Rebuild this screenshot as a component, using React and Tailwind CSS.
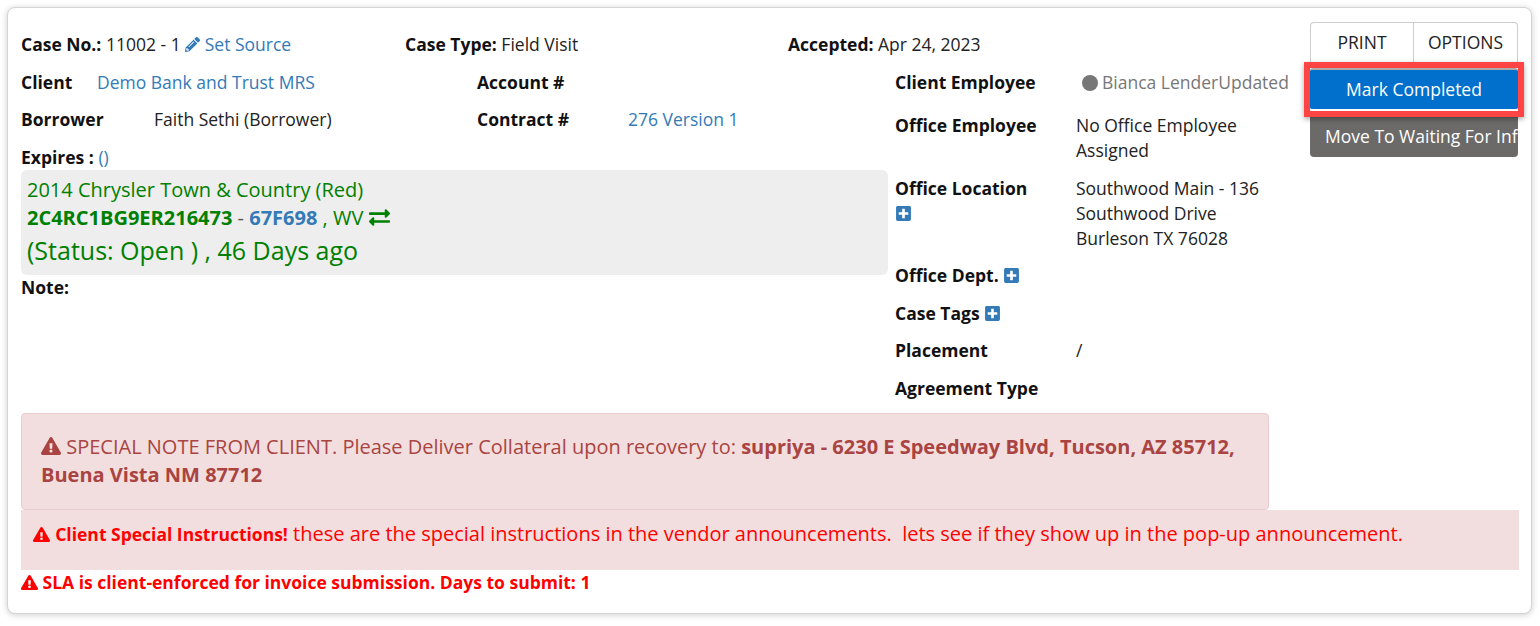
import { FaExclamationTriangle, FaPlusSquare, FaExchangeAlt, FaPencilAlt } from 'react-icons/fa'

const link = 'text-[#337ab7]'
const label = 'font-bold text-[#111]'

function InfoRow({ title, icon, breakIcon, className = 'mb-[12px]', children }) {
  return (
    <div className={`flex ${className}`}>
      <div className={`w-[181px] shrink-0 ${label}`}>
        {title}
        {icon && (
          <FaPlusSquare
            className={`${breakIcon ? 'block mt-[4px]' : 'inline ml-[4px] align-[-2px]'} text-[17px] text-[#337ab7]`}
          />
        )}
      </div>
      <div>{children}</div>
    </div>
  )
}

export default function App() {
  return (
    <div className="bg-white pt-[7px] pl-[7px] pr-[8px] pb-[12px] font-['Open_Sans',sans-serif] text-[17.5px] leading-[25px] text-[#222]">
      <div className="h-[607px] rounded-[8px] border border-[#d4d4d4] bg-white pl-[13px] pr-[12px] pt-[14px] shadow-[0_1px_6px_rgba(0,0,0,0.2)]">
        <div className="flex">
          <div className="w-[1248px] shrink-0 pt-[10px]">
            <div className="flex mb-[13px]">
              <div className="w-[384px]">
                <b className={label}>Case No.:</b> 11002 - 1{' '}
                <FaPencilAlt className={`inline text-[15px] align-[-1px] ${link}`} />{' '}
                <span className={link}>Set Source</span>
              </div>
              <div className="w-[383px]">
                <b className={label}>Case Type:</b> Field Visit
              </div>
              <div className="whitespace-nowrap">
                <b className={label}>Accepted:</b> Apr 24, 2023
              </div>
            </div>

            <div className="flex">
              <div className="w-[867px] shrink-0">
                <div className="flex mb-[12px]">
                  <div className={`w-[76px] ${label}`}>Client</div>
                  <div className={`w-[380px] ${link}`}>Demo Bank and Trust MRS</div>
                  <div className={label}>Account #</div>
                </div>
                <div className="flex mb-[13px]">
                  <div className={`w-[133px] ${label}`}>Borrower</div>
                  <div className="w-[323px]">Faith Sethi (Borrower)</div>
                  <div className={`w-[151px] ${label}`}>Contract #</div>
                  <div className={link}>276 Version 1</div>
                </div>
                <div>
                  <b className={label}>Expires :</b> <span className={link}>()</span>
                </div>
                <div className="h-[105px] rounded-[6px] bg-[#eeeeee] px-[6px] pt-[7px] text-[20px] text-[#008000]">
                  <div>2014 Chrysler Town &amp; Country (Red)</div>
                  <div className="mt-[3px]">
                    <b className="font-bold">2C4RC1BG9ER216473</b>
                    <span className="text-[#555]"> - </span>
                    <b className={`font-bold ${link}`}>67F698</b> , WV{' '}
                    <FaExchangeAlt className="inline text-[21px] align-[-3px]" />
                  </div>
                  <div className="mt-[4px] text-[25px] leading-[33px]">(Status: Open ) , 46 Days ago</div>
                </div>
                <div className={label}>Note:</div>
              </div>

              <div className="ml-[7px] whitespace-nowrap">
                <InfoRow title="Client Employee" className="mb-[18px]">
                  <span className="pl-[6px] text-[#777]">
                    <span className="mr-[4px] inline-block h-[16px] w-[16px] rounded-full bg-[#777] align-[-2px]" />
                    Bianca LenderUpdated
                  </span>
                </InfoRow>
                <InfoRow title="Office Employee" className="mb-[13px]">
                  No Office Employee
                  <br />
                  Assigned
                </InfoRow>
                <InfoRow title="Office Location" icon breakIcon>
                  Southwood Main - 136
                  <br />
                  Southwood Drive
                  <br />
                  Burleson TX 76028
                </InfoRow>
                <InfoRow title="Office Dept." icon className="mb-[13px]" />
                <InfoRow title="Case Tags" icon />
                <InfoRow title="Placement" className="mb-[13px]">/</InfoRow>
                <InfoRow title="Agreement Type" className="" />
              </div>
            </div>

            <div className="mt-[12px] h-[97px] rounded-[4px] border border-[#ebccd1] bg-[#f2dede] px-[19px] pt-[19px] text-[20px] leading-[28px] text-[#a94442]">
              <FaExclamationTriangle className="inline text-[20px] align-[-2px]" /> SPECIAL NOTE FROM CLIENT. Please
              Deliver Collateral upon recovery to:{' '}
              <b className="font-bold">supriya - 6230 E Speedway Blvd, Tucson, AZ 85712, Buena Vista NM 87712</b>
            </div>
          </div>

          <div className="ml-[41px] w-[208px] shrink-0">
            <div className="flex h-[40px]">
              <button className="w-[104px] rounded-tl-[4px] border border-b-0 border-[#ccc] bg-white text-[#222]">PRINT</button>
              <button className="w-[104px] rounded-tr-[4px] border border-b-0 border-l-0 border-[#ccc] bg-white text-[#222]">OPTIONS</button>
            </div>
            <div className="relative z-10 -mx-[6px] border-[6px] border-[#ff4444] bg-white shadow-[0_2px_5px_rgba(0,0,0,0.35)]">
              <button className="block h-[43px] w-full rounded-[3px] border-t-2 border-b-2 border-t-[#aaa] border-b-white bg-[#0070cc] text-white">Mark Completed</button>
            </div>
            <div className="h-[40px] overflow-hidden whitespace-nowrap rounded-b-[4px] bg-[#6b6a69] px-[15px] pt-[7px] text-white">
              Move To Waiting For Information
            </div>
          </div>
        </div>

        <div className="flex h-[60px] bg-[#f2dede] pl-[12px] pt-[11px] text-[20px] text-[#ff0000]">
          <div>
            <FaExclamationTriangle className="inline text-[17px] align-[-2px]" />{' '}
            <b className="font-bold text-[17.5px]">Client Special Instructions!</b>{' '}
            <span className="whitespace-pre">these are the special instructions in the vendor announcements.  lets see if they show up in the pop-up announcement.</span>
          </div>
        </div>
        <div className="font-bold text-[#ff0000] leading-[25px]">
          <FaExclamationTriangle className="inline text-[17px] align-[-2px]" /> SLA is client-enforced for invoice submission. Days to submit: 1
        </div>
      </div>
    </div>
  )
}
